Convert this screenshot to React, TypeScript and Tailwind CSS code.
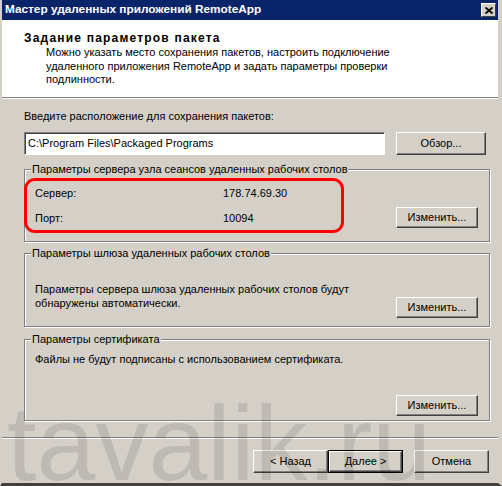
import React from "react";

const Btn = ({
  label,
  w,
  h = "h-[23px]",
  primary,
}: {
  label: string;
  w: string;
  h?: string;
  primary?: boolean;
}) => (
  <div
    className={`${w} ${h} shrink-0 ${
      primary ? "border border-black" : ""
    } bg-[#d4d0c8]`}
  >
    <div className="flex h-full w-full items-center justify-center border-t border-l border-white border-r border-b border-r-[#404040] border-b-[#404040] shadow-[inset_-1px_-1px_0_#808080] text-black">
      {label}
    </div>
  </div>
);

const Group = ({
  title,
  h,
  className,
  children,
}: {
  title: string;
  h: string;
  className?: string;
  children: React.ReactNode;
}) => (
  <div
    className={`${h} ${className ?? ""} flex flex-col border border-[#808080] shadow-[inset_1px_1px_0_#ffffff,1px_1px_0_#ffffff]`}
  >
    <span className="-mt-[8px] ml-[6px] self-start bg-[#d4d0c8] px-px leading-[14px]">
      {title}
    </span>
    {children}
  </div>
);

export default function App() {
  return (
    <div className="relative flex h-[486px] w-[502px] flex-col overflow-hidden border-l-2 border-r-4 border-b-[3px] border-l-[#d4d0c8] border-r-[#d4d0c8] border-b-[#404040] bg-[#d4d0c8] font-['Liberation_Sans',sans-serif] text-[11px] text-black">
      {/* title bar */}
      <div className="flex h-[20px] shrink-0 items-center justify-between bg-[#0a246a] pl-[3px] pr-[2px]">
        <span className="text-[11.8px] font-bold text-white">
          Мастер удаленных приложений RemoteApp
        </span>
        <div className="flex h-[14px] w-[15px] items-center justify-center border-t border-l border-white border-r border-b border-r-[#404040] border-b-[#404040] bg-[#d4d0c8]">
          <svg width="8" height="7" viewBox="0 0 8 7">
            <path d="M0.5 0.5 L7.5 6.5 M7.5 0.5 L0.5 6.5" stroke="#000" strokeWidth="1.8" />
          </svg>
        </div>
      </div>

      {/* header */}
      <div className="h-[77px] shrink-0 bg-white pl-[22px] pt-[11px]">
        <div className="text-[12px] font-bold leading-[14px] tracking-[1.2px]">
          Задание параметров пакета
        </div>
        <div className="mt-px pl-[22px] leading-[13.5px]">
          Можно указать место сохранения пакетов, настроить подключение
          <br />
          удаленного приложения RemoteApp и задать параметры проверки
          <br />
          подлинности.
        </div>
      </div>
      <div className="h-[2px] shrink-0 border-t border-b border-t-[#808080] border-b-white" />

      {/* body */}
      <div className="flex flex-col pl-[22px] pr-[8px] pb-[16px]">
        <div className="mt-[10px] leading-[14px]">
          Введите расположение для сохранения пакетов:
        </div>
        <div className="mt-[9px] flex items-center justify-between pr-[4px]">
          <div className="flex h-[23px] w-[361px] items-center border-t border-l border-b border-r border-t-[#808080] border-l-[#808080] border-b-white border-r-white bg-white pl-[3px] shadow-[inset_1px_1px_0_#404040]">
            C:\Program Files\Packaged Programs
          </div>
          <Btn label="Обзор..." w="w-[90px]" />
        </div>

        <Group
          title="Параметры сервера узла сеансов удаленных рабочих столов"
          h="h-[73px]"
          className="mt-[14px]"
        >
          <div className="flex items-start pl-[10px] pr-[11px] pt-[10px]">
            <div className="grid flex-1 grid-cols-[188px_1fr] gap-y-[11px] leading-[14px]">
              <span>Сервер:</span>
              <span>178.74.69.30</span>
              <span>Порт:</span>
              <span>10094</span>
            </div>
            <div className="mt-[21px]">
              <Btn label="Изменить..." w="w-[82px]" h="h-[21px]" />
            </div>
          </div>
        </Group>

        <Group
          title="Параметры шлюза удаленных рабочих столов"
          h="h-[74px]"
          className="mt-[11px]"
        >
          <div className="flex items-start pl-[10px] pr-[11px] pt-[22px]">
            <div className="flex-1 leading-[14px]">
              Параметры сервера шлюза удаленных рабочих столов будут
              <br />
              обнаружены автоматически.
            </div>
            <div className="mt-[15px]">
              <Btn label="Изменить..." w="w-[82px]" h="h-[21px]" />
            </div>
          </div>
        </Group>

        <Group
          title="Параметры сертификата"
          h="h-[82px]"
          className="mt-[12px]"
        >
          <div className="flex flex-col pl-[10px] pr-[11px] pt-[6px]">
            <div className="leading-[14px]">
              Файлы не будут подписаны с использованием сертификата.
            </div>
            <div className="mt-[29px] self-end">
              <Btn label="Изменить..." w="w-[82px]" h="h-[21px]" />
            </div>
          </div>
        </Group>
      </div>

      <div className="h-[2px] shrink-0 border-t border-b border-t-[#808080] border-b-white" />

      {/* footer */}
      <div className="flex flex-1 items-start justify-end pr-[9px] pt-[11px]">
        <Btn label="< Назад" w="w-[75px]" />
        <Btn label="Далее >" w="w-[75px]" primary />
        <div className="ml-[11px]">
          <Btn label="Отмена" w="w-[75px]" />
        </div>
      </div>

      {/* red annotation */}
      <div className="pointer-events-none absolute left-[22px] top-[178px] h-[55px] w-[320px] rounded-[11px] border-[3px] border-[#ff0000]" />

      {/* watermark */}
      <div className="pointer-events-none absolute left-[5px] top-[390px] select-none text-[106px] leading-none text-black/10">
        tavalik.ru
      </div>
    </div>
  );
}
